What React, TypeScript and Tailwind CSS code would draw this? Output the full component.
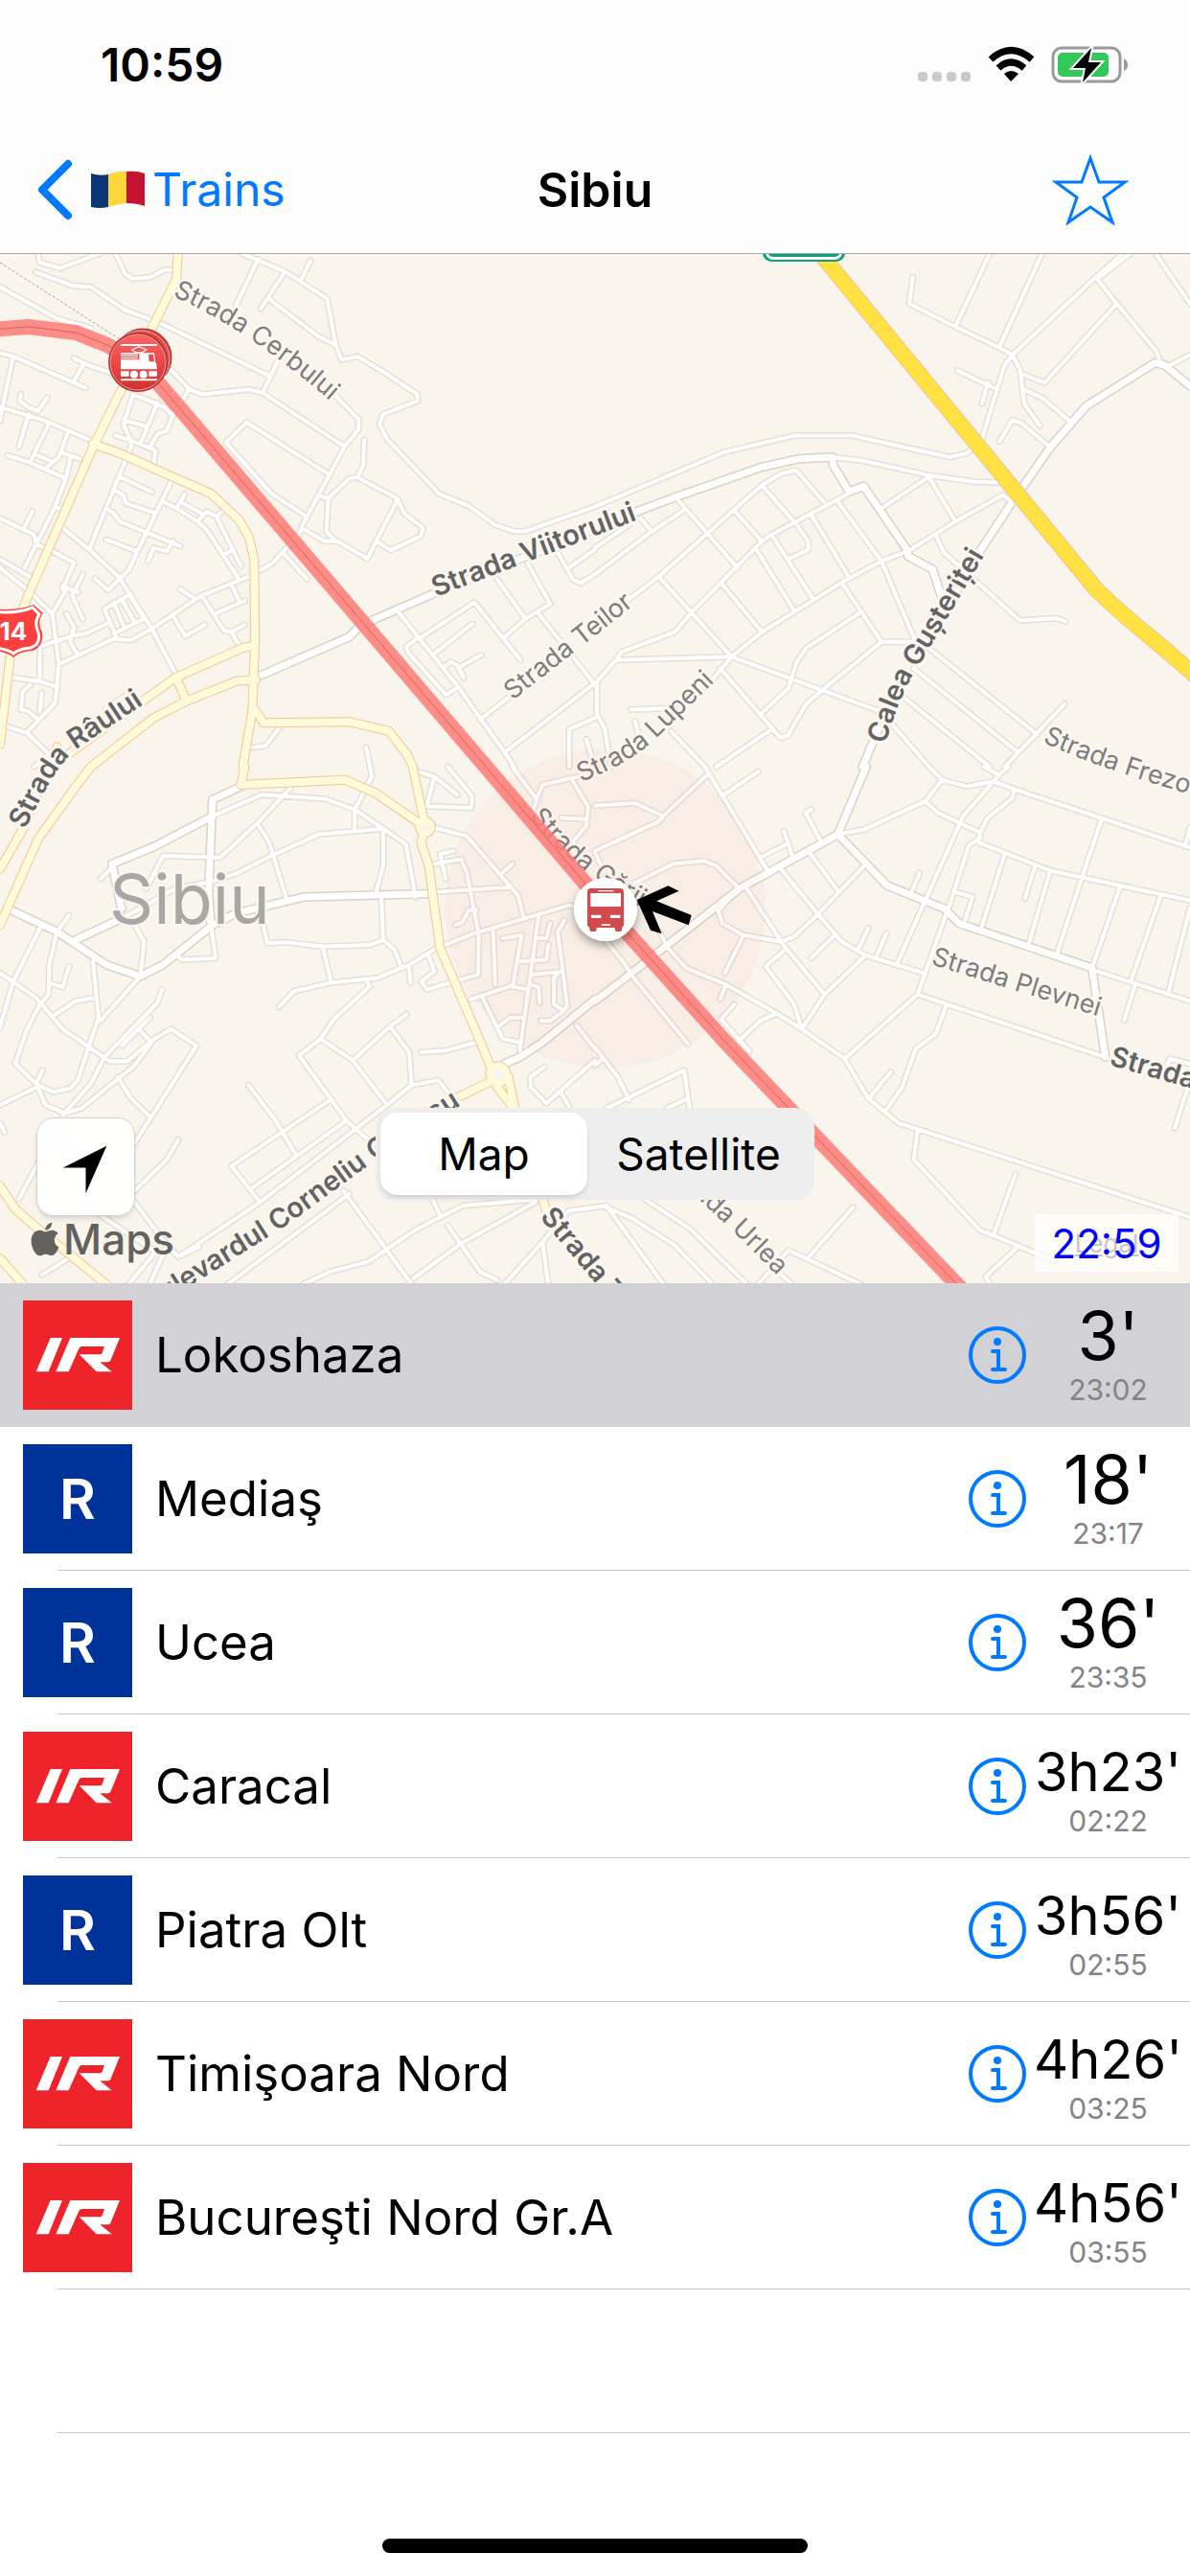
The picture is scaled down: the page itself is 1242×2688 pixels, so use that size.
import { useState } from "react";

type Train = { line: "IR" | "R"; name: string; wait: string; time: string };

const trains: Train[] = [
    { line: "IR", name: "Lokoshaza", wait: "3'", time: "23:02" },
    { line: "R", name: "Mediaş", wait: "18'", time: "23:17" },
    { line: "R", name: "Ucea", wait: "36'", time: "23:35" },
    { line: "IR", name: "Caracal", wait: "3h23'", time: "02:22" },
    { line: "R", name: "Piatra Olt", wait: "3h56'", time: "02:55" },
    { line: "IR", name: "Timişoara Nord", wait: "4h26'", time: "03:25" },
    { line: "IR", name: "Bucureşti Nord Gr.A", wait: "4h56'", time: "03:55" },
];

// The street network is stored in four tiles of 1568 x 1568 units each
const tiles = [
    {
        transform: "translate(0 0) scale(0.396 0.3444)",
        minor: "M100 14L105 40L158 58L260 14M305 14L330 75L350 90L395 85L435 62L465 64M95 70L190 110L240 115L330 185L415 220L712 385M0 115L150 210L240 240M640 14L755 70L862 150L885 290L900 335L943 325L1015 375L1100 440L1100 460L1010 500L1000 530L1020 575L1158 742L1235 778L1305 835L1355 855L1385 855L1568 780M818 35L793 95M680 30L622 170M750 70L687 180M705 148L840 265L885 290M740 320L692 435M450 365L500 425L535 440L655 425L692 435L908 598M885 445L945 515L945 545L908 598L800 830L790 860L720 950L660 990L530 1050L400 1150L345 1185L300 1180L160 1255M595 585L650 525L870 685M595 585L715 740L805 808M960 578L957 655L943 690L920 695L865 755L843 748M943 692L1047 755L1065 800L1115 845L1108 870L1030 912L992 885M1047 760L968 938L890 885L855 885L795 845M865 755L860 855L885 885M750 925L810 1000M0 315L35 325L215 415L225 420M220 348L195 400M195 330L225 348L300 378M35 325L8 470L0 520M0 478L120 520L180 550L240 580M55 440L52 460L75 480L100 490L125 450M75 500L50 600M130 525L82 640M20 625L75 645L165 690M180 552L155 630L125 660M160 615L210 635M100 625L140 645M185 635L175 690L145 780L65 965M145 780L165 790M85 795L62 850M0 815L90 865L95 895L130 910L195 950L165 1030M165 845L235 910L315 995L350 1060L400 1150L460 1280M415 465L370 590M350 445L325 530L345 580L410 610L405 650M305 565L345 580L345 600L235 910M330 520L380 535M350 440L405 465L435 480L455 505L495 430M455 505L440 550L415 560L395 600M315 690L400 735M300 730L325 745L332 770L410 800M285 790L300 800L315 825L475 900M280 880L360 915M455 695L360 920L340 970L315 1000L285 1033L250 998M430 765L465 785L520 825L545 850L630 1000M487 742L465 785M475 765L530 800M525 820L545 795L570 810L635 960M590 790L570 810M590 925L607 915M390 945L405 905L440 915L455 885M610 1015L632 1070M535 1055L590 1155L610 1160L630 1200M565 1105L645 1065M610 1160L645 1138M475 1030L515 1060M455 1110L488 1172L540 1138M218 985L215 995L190 1050L218 1120M165 1020L205 1040M0 940L90 1000M0 965L80 1040L138 1105L155 1255L150 1330L145 1375L70 1465L0 1440M175 1030L138 1105M115 1200L195 1170L225 1165L290 1130M175 1105L195 1145L185 1190L205 1230M345 1045L275 1090L305 1170M300 1070L325 1140M320 1060L355 1130M340 1045L380 1120L300 1165M105 1200L105 1310M20 1295L105 1310L150 1325M80 1320L60 1340L55 1395L75 1400L95 1420M110 1345L105 1400M70 1465L130 1530L90 1568M280 1390L350 1340M740 1445L700 1505L665 1510M965 1510L975 1568M1050 1100L1210 1330L1330 1525L1355 1568M1330 1525L1568 1315M1105 1180L1250 1070L1372 1245M1105 1175L1070 1205L1078 1225L1175 1350L1205 1330M1145 1225L1245 1135M1168 1270L1188 1250L1205 1260L1222 1298M1208 1268L1268 1230M1265 1425L1350 1350M1310 1000L1385 1120L1325 1180M1390 950L1450 1075L1385 1120M1420 1105L1568 1320M1470 920L1510 1000L1530 1012L1568 985M1500 965L1568 910M1500 1568L1500 1455L1568 1420M1545 1485L1568 1568",
        major: "M680 1295L920 1175L950 1140L1140 1045L1680 795",
        yellow: "M470 0L465 90L400 240L245 600L70 1060L30 1200L0 1500M245 590L320 620L455 690L555 740L630 820L655 870L670 940L672 1190L665 1400L640 1568M180 1530L375 1370L460 1300L635 1210L668 1200M240 1568L405 1420L490 1370L625 1308L675 1305M465 1300L490 1365M675 1400L695 1435L920 1432L1025 1460L1075 1535L1088 1568",
    },
    {
        transform: "translate(621 0) scale(0.396 0.3444)",
        minor: "M838 85L828 165L950 235L1065 298L1100 320L1320 85L1390 14M1040 14L950 235M1178 14L1065 298M1330 85L1410 14M1320 85L1375 165L1480 310L1490 345M1375 165L1185 405L1128 380M1478 14L1568 165M1510 355L1568 320M1100 320L1078 355L1020 575M1100 320L1120 365L1132 470L1173 535M1130 425L1178 450L1250 520M955 368L1060 425M1035 405L1020 468M1066 582L1100 518L1125 528L1195 595M0 780L340 615L525 565L685 565L705 572L935 630L980 618L1000 600M625 630L710 642L880 685L1000 705L1075 708M880 690L755 785M880 690L950 825M215 755L375 965M440 715L535 840L562 885L562 910L508 940M440 715L490 680L530 670L610 775M670 740L465 865L440 885L255 1100L210 1160L70 1220L55 1245L5 1310L5 1410L25 1450L42 1568M90 1060L170 990L440 715M370 795L440 885M465 865L572 1055M425 910L525 1095M640 765L755 945L845 1190M570 805L670 995M170 995L360 1235M335 1015L440 1160M120 815L150 855L0 985M235 790L150 855M90 835L0 905M1100 765L1075 745L950 825L825 915L755 945L650 1010L440 1160L360 1235L55 1245M650 1010L755 1190L845 1190M755 1190L600 1335L555 1380L508 1475L488 1480L330 1270M700 1100L555 1210L530 1255L510 1330L440 1405M360 1235L750 1400M780 1435L880 1568M360 1235L290 1330M900 870L920 920L1120 1125L1215 1118L1240 1128M870 1200L1165 1470M1238 1378L1080 1568M840 1270L1115 1525M800 1345L1040 1568M95 1395L210 1390M105 1430L120 1490M200 1460L290 1568M465 1455L320 1568",
        major: "M110 795L215 750L440 660L540 635L625 630L628 655L670 735L708 718L825 915L825 930L890 970L915 1060M880 1190L1000 940L1100 765L1200 600L1295 475L1475 345L1500 350L1568 415M705 1568L760 1420",
        yellow: "",
    },
    {
        transform: "translate(0 540) scale(0.396 0.3444)",
        minor: "M560 150L690 85L860 98L935 130L1070 235L1095 395M765 65L680 170L580 275L430 270L385 370M680 175L710 230L755 400M975 0L980 30L935 130L935 195M320 460L400 410L460 370L550 350L620 325L715 270L840 205L1010 188L1010 300L990 385M1010 188L935 130M1145 185L1230 210L1350 370L1365 390L1380 455M1005 400L1010 525L1040 555L1058 608M685 440L705 535L755 532L850 545L975 540L1010 525M850 545L872 650M735 728L775 680L870 655L995 640L1080 600L1150 550L1250 505L1500 420L1568 440M965 645L975 665L880 765L845 825L788 875L915 1075L985 1145M845 825L930 890L1020 1025M930 890L1030 785L1072 750M1030 790L1078 865L1085 965L1155 950L1190 1000M1085 965L1020 1025L685 1320L470 1485M1110 865L1175 860L1255 835M655 965L725 1070L782 1180M685 1320L610 1210L870 1010M660 1280L910 1075M555 470L568 580L480 585L465 570M355 480L380 530L370 635L265 770M265 340L295 305M182 450L150 500L130 600L128 690L105 720L70 800L40 900L100 965L140 985L185 975L205 950L260 760L245 590M128 655L165 668L182 605M105 490L35 650L0 790M0 625L95 700L165 795L290 893L335 893L400 830L450 795L518 845L355 1140M140 755L200 710L250 700M427 675L415 715L275 880L240 960L170 1050L120 1025L95 960L112 920M0 1025L100 970M395 760L322 845M365 795L400 835L355 905L215 1035L170 1050L50 1310M310 940L345 1005L390 1055M470 1130L440 1190L355 1285M0 1080L12 1108M355 1320L440 1450L470 1485L525 1455M110 1540L180 1490M340 1568L410 1470L240 1340L160 1090M395 1568L440 1450M905 1285L1085 1568M600 1568L920 1295M800 1568L870 1530L970 1500L1100 1400L1220 1330L1420 1310M1090 1550L1215 1445L1410 1320M1180 1390L1265 1530L1310 1555M1330 1568L1430 1440L1500 1345L1568 1335M1430 1440L1445 1568M1140 1310L1160 1360M1350 0L1415 100L1400 150M1415 95L1430 55L1505 35L1568 20M1480 155L1548 160M1505 35L1550 120L1545 180L1500 240M1100 15L1145 30L1205 85M1145 30L1125 120L1242 125L1245 90L1180 0M1145 295L1215 280L1230 320L1262 510L1260 630L1125 675L1110 650L1145 620L1130 575M1160 265L1195 255M1160 265L1175 340M1200 480L1220 470L1235 435L1255 435M1145 380L1345 365M1325 320L1350 295M1300 500L1305 660M1078 600L1082 655M1325 520L1375 510L1352 660M1370 590L1440 585L1445 540M1420 450L1370 860M1450 475L1440 520L1415 520M1488 465L1470 500L1495 725L1480 745L1450 770L1425 770M1400 630L1475 622L1460 640L1460 720L1480 735M1400 660L1420 668L1422 715M1240 705L1345 665L1390 675M1270 695L1325 825L1370 835M1310 790L1345 760L1380 760M1435 910L1398 940L1398 970L1440 1020L1568 890M1480 990L1500 1030M1520 785L1568 855",
        major: "M635 60L560 100L550 380L555 470M560 150L410 240L295 295L320 430M20 430L150 500L280 600L370 635L430 600L560 480L620 445L800 395L1140 385M190 530L320 460M1568 705L1430 835L1370 880L1330 900",
        yellow: "M150 -60L60 190L0 310M240 0L200 60L100 220L0 480M645 0L635 55L910 40L990 80L1110 175M1088 0L1120 180L1110 230L1130 300L1160 550L1250 790L1290 900L1310 970L1370 1060L1430 1310L1450 1380M1340 940L1360 1050M1300 950L1210 1000L1100 1060M0 1270L40 1340L100 1400L280 1568M0 1490L60 1568",
    },
    {
        transform: "translate(621 540) scale(0.396 0.3444)",
        minor: "M0 118L105 110L180 150L300 20M290 0L300 20L455 315M340 85L430 15M0 255L170 165L180 150M0 260L20 310M100 355L205 295L285 285L320 300L380 370M435 275L505 235M498 195L520 270M570 130L555 140L595 225M640 205L710 190L870 105L915 40L880 0M915 40L980 60L1050 45L1110 70L1568 245M1025 0L1065 25L1090 0M1065 25L970 150L795 600M870 105L905 140L1015 200L1035 155L1100 95L1105 70M1015 200L1010 230L1090 265L1200 315L1568 405M1015 215L985 240L940 400L850 690M1335 160L1285 330L1215 575M1080 265L1018 490M1160 300L1133 400M1200 315L1142 540M1385 360L1310 610M1490 395L1412 650M1568 430L1510 690M1568 185L1555 240M1310 615L1568 710M1425 655L1395 768M945 378L995 395L975 465M855 322L833 385M490 310L590 450L650 530L710 570L865 625M565 260L640 375M710 300L585 450L525 515L490 530L390 510L335 475L325 435L380 370M400 370L500 545L605 690M390 515L342 625M185 540L240 610L345 660L475 745L545 795L658 885L720 1005L800 1080L1568 1365M720 490L693 555M768 505L742 575M630 512L570 580M710 575L605 690L545 795L525 720L450 605L500 555M345 660L330 705M475 750L435 770L380 830M367 720L332 765L407 862M850 690L658 885M850 690L1345 880M925 725L898 810L845 855L810 970L768 1040M780 925L722 1005M850 1105L840 1190L1015 1405L1050 1420L1215 1500M1108 1235L1050 1420M1110 1460L1030 1545L1040 1568M30 530L80 600L95 630L245 840M170 500L190 545M0 850L60 940L90 1010M20 885L0 905M30 1035L235 920L250 1040M190 1035L245 1005M0 1335L30 1330L180 1568M30 1335L100 1370L210 1450L310 1568M130 1310L250 1400L400 1568M680 1335L560 1490M430 1568L510 1465L700 1568M470 1520L520 1568M1568 900L1515 885L1505 910M1560 980L1528 1095",
        major: "M715 0L640 205L380 370L80 640L0 710M640 205L770 360L920 430L960 475L1310 610L1345 880",
        yellow: "",
    },
];

const labels = [
    { id: "cerbului", text: "Strada Cerbului", d: "M180 49Q262 84 360 172", bold: false },
    { id: "viitorului", text: "Strada Viitorului", d: "M455 363L700 269", bold: true },
    { id: "teilor", text: "Strada Teilor", d: "M535 471L680 357", bold: false },
    { id: "raului", text: "Strada Râului", d: "M26 606C45 568 60 535 85 518L190 448", bold: true },
    { id: "lupeni", text: "Strada Lupeni", d: "M606 556Q650 540 680 515L770 428", bold: false },
    { id: "gusteritei", text: "Calea Gușteriței", d: "M924 517Q940 460 962 430L1050 281", bold: true },
    { id: "frezorilor", text: "Strada Frezorilor", d: "M1088 514Q1150 545 1300 585", bold: false },
    { id: "plevnei", text: "Strada Plevnei", d: "M971 746L1190 814", bold: false },
    { id: "strada-e", text: "Strada", d: "M1157 851L1300 892", bold: true },
    { id: "garii", text: "Strada Gării", d: "M553 592Q595 650 700 704", bold: false },
    { id: "corneliu", text: "Bulevardul Corneliu Coposu", d: "M156 1109L300 1018L390 952L560 842", bold: true },
    { id: "strada-s", text: "Strada Turn", d: "M563 1010L690 1160", bold: true },
    { id: "urlea", text: "Strada Urlea", d: "M695 963Q755 1010 850 1112", bold: false },
];

const RAIL = "M-10 84L30 81L79 87L112 100L150 122L507 540L657 716L756 826L898 975L1010 1092";

function Streets() {
    return (
        <g fill="none" strokeLinecap="round" strokeLinejoin="round">
            {tiles.map((t) => (
                <g key={t.transform} transform={t.transform}>
                    <path d={t.minor} stroke="#e4e0d7" strokeWidth="7" vectorEffect="non-scaling-stroke" />
                    <path d={t.major} stroke="#dad2c7" strokeWidth="10" vectorEffect="non-scaling-stroke" />
                </g>
            ))}
            {tiles.map((t) => (
                <g key={t.transform} transform={t.transform}>
                    <path d={t.minor} stroke="#fff" strokeWidth="4" vectorEffect="non-scaling-stroke" />
                    <path d={t.major} stroke="#fff" strokeWidth="7" vectorEffect="non-scaling-stroke" />
                </g>
            ))}
            {tiles.map((t) => (
                <path key={t.transform} transform={t.transform} d={t.yellow} stroke="#f5c592" strokeWidth="10" vectorEffect="non-scaling-stroke" />
            ))}
            <circle cx="444" cy="603" r="7" stroke="#f5c592" strokeWidth="8" />
            <circle cx="520" cy="861" r="9" stroke="#f5c592" strokeWidth="9" />
            {tiles.map((t) => (
                <path key={t.transform} transform={t.transform} d={t.yellow} stroke="#fdfbda" strokeWidth="8" vectorEffect="non-scaling-stroke" />
            ))}
            <circle cx="444" cy="603" r="7" fill="#f9f4ec" stroke="#fdfbda" strokeWidth="6" />
            <circle cx="520" cy="861" r="9" fill="#f9f4ec" stroke="#fdfbda" strokeWidth="7" />
        </g>
    );
}

function TramMarker() {
    return (
        <g>
            <circle cx="149" cy="113" r="30" fill="#d8413f" stroke="#a92c2c" strokeWidth="1" />
            <circle cx="147" cy="115" r="30" fill="#e04a48" stroke="#f2a5a1" strokeWidth="1" />
            <circle cx="144" cy="118" r="31" fill="#b13230" />
            <circle cx="144" cy="118" r="29" fill="url(#tram)" stroke="#e8a09c" strokeWidth="1" />
            <g transform="translate(100 70) scale(0.3333)" fill="#fff">
                <path d="M78 87H192V93H78ZM78 196H192V202H78ZM78 115H132V119H78ZM78 122H132V126H78ZM78 129H132V133H78ZM78 136H136V164H78Z" />
                <path fillRule="evenodd" d="M136 115H183L189 164H136ZM165 119L167 142H183L180 119Z" />
                <path d="M78 145H189L192 166H78ZM78 172H104V188H78ZM166 172H192V188H166Z" />
                <circle cx="120" cy="182" r="12" />
                <circle cx="149" cy="182" r="12" />
                <path d="M113 105L135 95L158 105L145 114H126Z" fill="none" stroke="#fff" strokeWidth="4" />
            </g>
        </g>
    );
}

function BusMarker() {
    return (
        <g>
            <circle cx="632" cy="689" r="33" fill="#fff" filter="url(#shadow)" />
            <g transform="translate(580 640) scale(0.3333)">
                <path d="M110 81H202Q213 81 213 92V198L207 204V211Q207 216 202 216H190Q185 216 185 204H128Q128 216 123 216H112Q106 216 106 211V204L99 198V92Q99 81 110 81Z" fill="#d04a4e" />
                <path d="M109 96H204V138H109ZM133 87H181V91H133ZM111 164H142V174H111ZM171 164H202V174H171ZM144 193H171V198H144ZM134 204H181L187 216H127Z" fill="#fff" />
                <path d="M254 117L352 73L386 89L316 121L425 165L416 196L303 153L332 223L297 212Z" fill="#000" />
            </g>
        </g>
    );
}

function CityMap() {
    return (
        <svg viewBox="0 5 1242 1074" className="block w-full bg-[#f9f4ec]" role="img" aria-label="Sibiu">
            <defs>
                <linearGradient id="tram" x1="0" y1="0" x2="0" y2="1">
                    <stop offset="0" stopColor="#ff6361" />
                    <stop offset="1" stopColor="#d2302f" />
                </linearGradient>
                <filter id="shadow" x="-40%" y="-40%" width="180%" height="180%">
                    <feDropShadow dx="0" dy="5" stdDeviation="5" floodOpacity="0.35" />
                </filter>
                {labels.map((l) => (
                    <path key={l.id} id={l.id} d={l.d} />
                ))}
            </defs>

            <Streets />
            <path d="M0 14L125 94" stroke="#a9a9a9" strokeWidth="1" strokeDasharray="3 2" />
            <path d="M843 -12L863 13L1144 355Q1172 382 1207 410L1250 447" fill="none" stroke="#f2bf8e" strokeWidth="17" />
            <path d="M843 -12L863 13L1144 355Q1172 382 1207 410L1250 447" fill="none" stroke="#ffe142" strokeWidth="15" />
            <rect x="796" y="-30" width="86" height="43" rx="9" fill="#0ba37f" />
            <rect x="799" y="-30" width="80" height="41" rx="8" fill="#fff" />
            <rect x="801" y="-30" width="76" height="38" rx="6" fill="#0ba37f" />

            {/* DN14 shield */}
            <path d="M-16 374Q14 379 35 371L45 380Q38 388 44 400Q46 415 34 419Q20 420 14 426Q8 420 -8 419Z" fill="#fe3f3f" />
            <path d="M-16 377Q14 382 34 374L41 381Q35 389 40 400Q43 412 32 416Q20 417 14 422Q8 417 -8 416" fill="none" stroke="#fff" strokeWidth="3" />
            <text x="14" y="408" textAnchor="middle" className="text-[26px] font-bold" fill="#fff">14</text>

            <g strokeLinejoin="round">
                {labels.map((l) => (
                    <text
                        key={l.id}
                        className={l.bold ? "text-[29px] font-semibold" : "text-[27px]"}
                        fill={l.bold ? "#636363" : "#7d7d7d"}
                        stroke="#fbf7f0"
                        strokeWidth="6"
                        paintOrder="stroke"
                    >
                        <textPath href={`#${l.id}`}>{l.text}</textPath>
                    </text>
                ))}
            </g>
            <text x="114" y="704" className="text-[72px]" fill="#a9a8a4" stroke="#fbf7f0" strokeWidth="4" paintOrder="stroke">Sibiu</text>

            <path d={RAIL} fill="none" stroke="#ff7a75" strokeOpacity="0.85" strokeWidth="16" strokeLinejoin="round" />
            <path d={RAIL} fill="none" stroke="#d9605c" strokeWidth="1" />
            <circle cx="632" cy="688" r="167" fill="#e0403a" fillOpacity="0.03" />
            <TramMarker />
            <BusMarker />
        </svg>
    );
}

function StatusIcons() {
    return (
        <svg viewBox="0 0 224 40" className="h-10 w-[224px]" aria-hidden="true">
            <g fill="#cacaca">
                <rect x="4" y="27" width="10" height="10" rx="4" />
                <rect x="19" y="27" width="10" height="10" rx="4" />
                <rect x="34" y="27" width="10" height="10" rx="4" />
                <rect x="49" y="27" width="10" height="10" rx="4" />
            </g>
            <g fill="none" stroke="#000" strokeWidth="7">
                <path d="M80 14Q101 -5 123 14" />
                <path d="M88 23Q101 11 115 23" />
            </g>
            <path d="M94 29Q101 23 109 29L101 37Z" />
            <rect x="145" y="2" width="70" height="35" rx="9" fill="none" stroke="#9a9a9a" strokeWidth="3" />
            <path d="M219 13Q223 15 223 20Q223 24 219 26Z" fill="#9a9a9a" />
            <rect x="150" y="7" width="53" height="25" rx="5" fill="#34c759" />
            <path d="M185 2L166 23H179L176 38L195 17H182Z" stroke="#fff" strokeWidth="4" paintOrder="stroke" />
        </svg>
    );
}

function LineBadge({ line }: { line: Train["line"] }) {
    if (line === "R") {
        return (
            <span className="flex size-[114px] shrink-0 items-center justify-center bg-[#003399] text-[58px] font-semibold text-white">R</span>
        );
    }
    return (
        <svg viewBox="0 0 342 342" className="size-[114px] shrink-0 bg-[#ee242a]" role="img" aria-label="IR">
            <g fill="#fff">
                <path d="M86 117H123L80 223H41Z" />
                <path fillRule="evenodd" d="M148 117H303L274 188Q271 193 264 193H241L278 223H230L176 169H241Q246 169 248 164L255 144H185Q178 144 175 151L143 223H103Z" />
            </g>
        </svg>
    );
}

function TrainRow({ train, selected, onSelect }: { train: Train; selected: boolean; onSelect: () => void }) {
    return (
        <li className={selected ? "bg-[#d1d1d6]" : "bg-white"} onClick={onSelect}>
            <div className="flex h-[149px] items-center pt-px pl-6">
                <LineBadge line={train.line} />
                <span className="min-w-0 flex-1 pl-6 text-[51px]">{train.name}</span>
                <button type="button" aria-label={`Info ${train.name}`} className="size-[60px]">
                    <svg viewBox="0 0 60 60" fill="none" stroke="#007aff" strokeWidth="4">
                        <circle cx="30" cy="30" r="28" />
                        <circle cx="30" cy="16" r="4" fill="#007aff" stroke="none" />
                        <path d="M25 26H31V45M25 45H38" strokeLinecap="round" />
                    </svg>
                </button>
                <div className="flex w-[171px] flex-col items-center self-start pt-[14px]">
                    <span className="text-[70px] leading-20">
                        <span className={train.wait.length > 3 ? "text-[56px] leading-none" : "leading-none"}>{train.wait}</span>
                    </span>
                    <span className="text-[30px] leading-8 text-[#848484]">{train.time}</span>
                </div>
            </div>
            <div className={selected ? "ml-[60px] h-px" : "ml-[60px] h-px bg-[#c6c6c8]"} />
        </li>
    );
}

export default function App() {
    const [selected, setSelected] = useState(0);
    const [mapType, setMapType] = useState("Map");

    return (
        <div className="flex min-h-screen flex-col overflow-hidden bg-white font-['Inter',sans-serif] text-black">
            <header className="border-b border-[#a9a9a9] bg-[#fcfcfc] pb-1">
                <div className="flex h-[136px] items-center justify-between pr-16 pl-[105px]">
                    <time className="text-[48px] font-semibold">10:59</time>
                    <StatusIcons />
                </div>
                <nav className="grid h-[124px] grid-cols-3 items-center px-[38px]">
                    <a href="#trains" className="flex items-center text-[#007aff]">
                        <svg viewBox="0 0 38 64" className="h-16 w-[38px]" fill="none" stroke="currentColor" strokeWidth="8" strokeLinecap="round" strokeLinejoin="round">
                            <path d="M33 5L6 32L33 59" />
                        </svg>
                        <svg viewBox="0 0 56 40" className="ml-[19px] h-10 w-14" role="img" aria-label="România">
                            <path d="M0 3Q9 6 18 4V38Q9 40 0 38Z" fill="#0b3479" />
                            <path d="M18 4Q28 0 37 1V34Q28 35 18 38Z" fill="#fcd63a" />
                            <path d="M37 1Q48 0 56 3V37Q48 34 37 34Z" fill="#c41230" />
                        </svg>
                        <span className="ml-2 text-[48px]">Trains</span>
                    </a>
                    <h1 className="text-center text-[50px] font-semibold">Sibiu</h1>
                    <button type="button" aria-label="Favourite" className="mr-[26px] justify-self-end">
                        <svg viewBox="0 0 80 74" className="h-[74px] w-20" fill="none" stroke="#007aff" strokeWidth="3">
                            <path d="M40 4L49 29H76L54 45L63 71L40 55L17 71L26 45L4 29H31Z" />
                        </svg>
                    </button>
                </nav>
            </header>

            <section className="relative">
                <CityMap />
                <button type="button" aria-label="My location" className="absolute bottom-[70px] left-[38px] size-[103px] rounded-[18px] border border-[#d4d2ce] bg-white/95 shadow-md">
                    <svg viewBox="0 0 102 102">
                        <path d="M27 52L73 29L51 79V52Z" />
                    </svg>
                </button>
                <div className="absolute bottom-6 left-8 flex items-center text-[#63625e]">
                    <svg viewBox="0 0 88 110" className="h-9 w-[30px]" fill="currentColor" aria-hidden="true">
                        <path d="M66 2C66 16 56 26 45 26C45 13 55 4 66 2ZM46 32C51 32 57 27 67 27C75 27 82 31 86 37C68 48 71 73 88 80C84 93 74 107 65 107C58 107 54 103 46 103C38 103 35 108 28 108C16 108 0 86 0 61C0 39 14 27 27 27C35 27 41 32 46 32Z" />
                    </svg>
                    <span className="ml-1 text-[44px] leading-11 font-medium">Maps</span>
                </div>
                <div className="absolute bottom-[87px] left-1/2 flex h-24 w-[458px] -translate-x-1/2 rounded-[20px] bg-[#eeeeef] p-[5px] text-[46px]">
                    {["Map", "Satellite"].map((type) => (
                        <button
                            key={type}
                            type="button"
                            aria-pressed={mapType === type}
                            onClick={() => setMapType(type)}
                            className={mapType === type ? "grow basis-[216px] rounded-[18px] bg-white shadow-md" : "grow basis-[232px] rounded-[18px]"}
                        >
                            {type}
                        </button>
                    ))}
                </div>
                <div className="absolute right-3 bottom-3 flex h-[60px] w-[150px] items-center justify-center bg-white/70">
                    <a href="#legal" className="absolute text-[26px] text-[#c6c6c6] underline">Legal</a>
                    <time className="relative text-[42px] text-[#0000ff]">22:59</time>
                </div>
            </section>

            <ul>
                {trains.map((train, i) => (
                    <TrainRow key={train.name} train={train} selected={i === selected} onSelect={() => setSelected(i)} />
                ))}
            </ul>
            <div className="ml-[60px] h-[150px] border-b border-[#c6c6c8]" />

            <footer className="mt-auto flex justify-center pb-6">
                <div className="h-[15px] w-[444px] rounded-full bg-black" />
            </footer>
        </div>
    );
}
